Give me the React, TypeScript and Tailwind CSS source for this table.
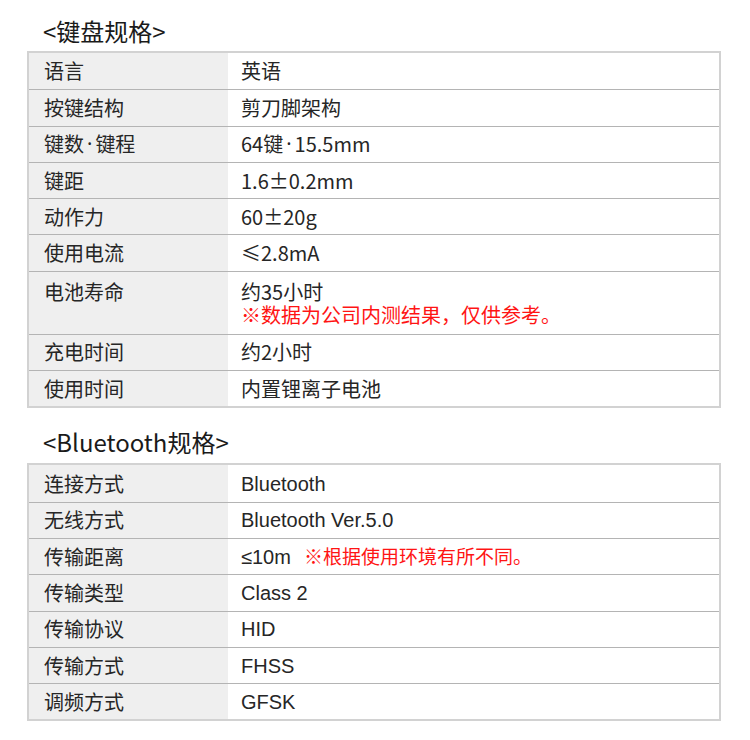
const cjk = "font-['Noto_Sans_CJK_SC',sans-serif]";
const latin = "font-['Liberation_Sans','Noto_Sans_CJK_SC',sans-serif]";

type Row = { label: React.ReactNode; key: string; value: React.ReactNode; tall?: boolean };

const dot = <span className="font-['Noto_Sans',sans-serif] mx-[3px]">·</span>;

const keyboard: Row[] = [
  { key: 'lang', label: '语言', value: '英语' },
  { key: 'struct', label: '按键结构', value: '剪刀脚架构' },
  {
    key: 'count',
    label: <>键数{dot}键程</>,
    value: <>64键{dot}15.5mm</>,
  },
  { key: 'pitch', label: '键距', value: '1.6±0.2mm' },
  { key: 'force', label: '动作力', value: '60±20g' },
  { key: 'current', label: '使用电流', value: '≤2.8mA' },
  {
    key: 'battery',
    label: '电池寿命',
    tall: true,
    value: (
      <>
        <div>约35小时</div>
        <div className="text-[#ff1414]">※数据为公司内测结果，仅供参考。</div>
      </>
    ),
  },
  { key: 'charge', label: '充电时间', value: '约2小时' },
  { key: 'use', label: '使用时间', value: '内置锂离子电池' },
];

const bluetooth: Row[] = [
  { key: 'conn', label: '连接方式', value: 'Bluetooth' },
  { key: 'wireless', label: '无线方式', value: 'Bluetooth Ver.5.0' },
  {
    key: 'range',
    label: '传输距离',
    value: (
      <>
        ≤10m<span className={`ml-[13px] text-[19px] text-[#ff1414] ${cjk}`}>※根据使用环境有所不同。</span>
      </>
    ),
  },
  { key: 'class', label: '传输类型', value: 'Class 2' },
  { key: 'proto', label: '传输协议', value: 'HID' },
  { key: 'mode', label: '传输方式', value: 'FHSS' },
  { key: 'mod', label: '调频方式', value: 'GFSK' },
];

function SpecTable({ rows, valueFont }: { rows: Row[]; valueFont: string }) {
  return (
    <div className="w-[694px] border-2 border-[#d2d2d2] text-[20px] text-[#262626]">
      {rows.map((r, i) => (
        <div
          key={r.key}
          className={`flex ${i > 0 ? 'border-t border-[#b4b4b4]' : ''} ${
            r.tall ? 'h-[63px] items-start' : 'h-[36.3px] items-stretch'
          }`}
        >
          <div
            className={`w-[199px] shrink-0 self-stretch bg-[#efefef] pl-[15px] ${cjk} ${
              r.tall ? 'pt-[8px] leading-[23px]' : 'flex items-center'
            }`}
          >
            {r.label}
          </div>
          <div
            className={`flex-1 pl-[13px] ${valueFont} ${
              r.tall ? 'pt-[8px] leading-[23px]' : 'flex items-center'
            }`}
          >
            {r.value}
          </div>
        </div>
      ))}
    </div>
  );
}

export default function App() {
  return (
    <div className="w-[750px] h-[740px] bg-white pl-[27px] pt-[18px]">
      <h2 className={`ml-[16px] text-[24px] leading-[26px] text-[#1a1a1a] ${cjk} mb-[7px]`}>&lt;键盘规格&gt;</h2>
      <SpecTable rows={keyboard} valueFont={cjk} />
      <h2 className={`ml-[16px] mt-[21px] text-[24px] leading-[26px] text-[#1a1a1a] ${cjk} mb-[8px]`}>
        &lt;Bluetooth规格&gt;
      </h2>
      <SpecTable rows={bluetooth} valueFont={latin} />
    </div>
  );
}
